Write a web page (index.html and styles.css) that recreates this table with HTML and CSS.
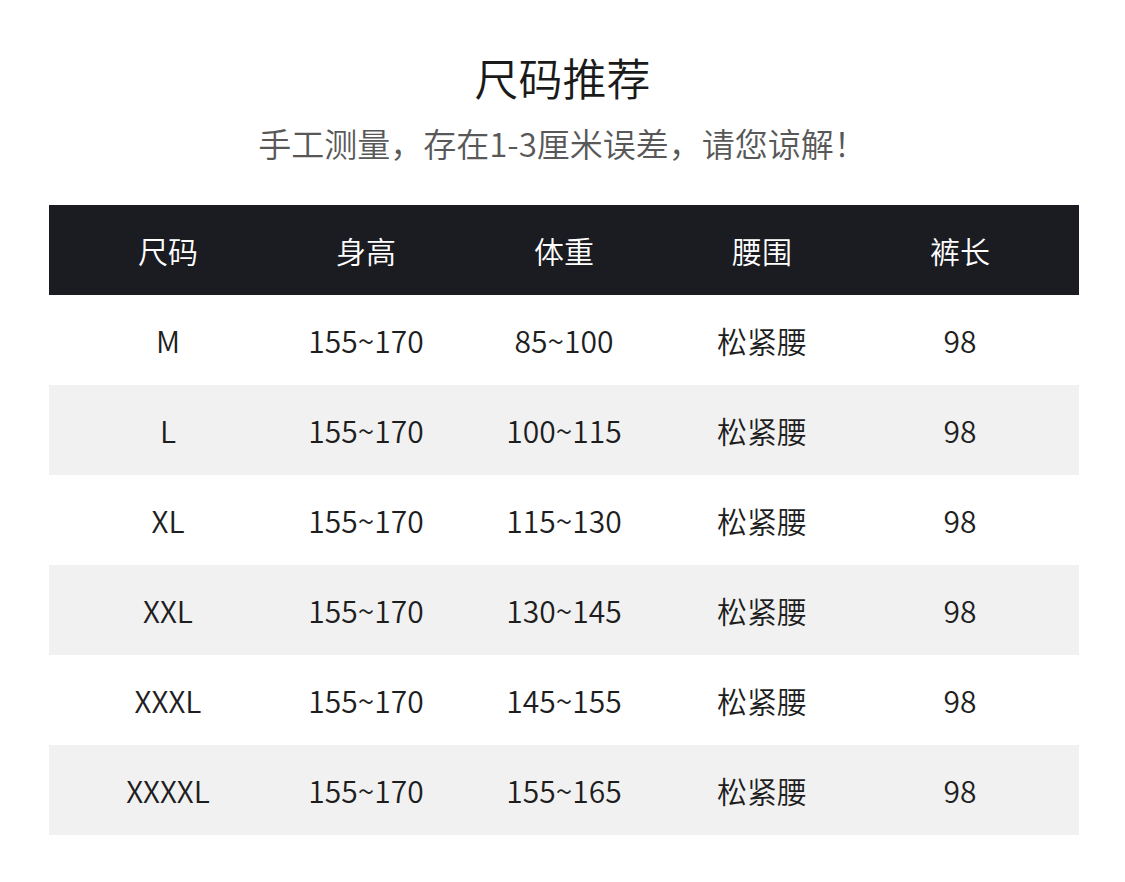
FILE: index.html
```html
<!DOCTYPE html>
<html lang="zh">
<head>
<meta charset="utf-8">
<link rel="stylesheet" href="styles.css">
</head>
<body>
<div class="page">
  <h1 class="title">尺码推荐</h1>
  <p class="subtitle">手工测量，存在1-3厘米误差，请您谅解！</p>
  <div class="table">
    <div class="row head"><span>尺码</span><span>身高</span><span>体重</span><span>腰围</span><span>裤长</span></div>
    <div class="row"><span>M</span><span>155~170</span><span>85~100</span><span>松紧腰</span><span>98</span></div>
    <div class="row alt"><span>L</span><span>155~170</span><span>100~115</span><span>松紧腰</span><span>98</span></div>
    <div class="row"><span>XL</span><span>155~170</span><span>115~130</span><span>松紧腰</span><span>98</span></div>
    <div class="row alt"><span>XXL</span><span>155~170</span><span>130~145</span><span>松紧腰</span><span>98</span></div>
    <div class="row"><span>XXXL</span><span>155~170</span><span>145~155</span><span>松紧腰</span><span>98</span></div>
    <div class="row alt"><span>XXXXL</span><span>155~170</span><span>155~165</span><span>松紧腰</span><span>98</span></div>
  </div>
</div>
</body>
</html>
```

FILE: styles.css
```css
html, body {
  margin: 0;
  padding: 0;
  background: #ffffff;
}
body {
  font-family: "Noto Sans CJK SC", "Noto Sans", sans-serif;
  font-weight: 350;
  color: #1e1e1e;
}
.page {
  width: 1125px;
  padding-top: 47px;
}
.title {
  margin: 0;
  font-size: 44px;
  font-weight: 350;
  line-height: 60px;
  text-align: center;
  color: #1a1a1a;
}
.subtitle {
  margin: 16px 0 0;
  font-size: 33px;
  font-weight: 350;
  line-height: 40px;
  text-align: center;
  color: #585858;
}
.table {
  margin: 42px 0 0 49px;
  width: 1030px;
}
.row {
  display: grid;
  grid-template-columns: repeat(5, 1fr);
  align-items: center;
  height: 90px;
  padding: 0 20px;
  font-size: 30px;
  font-weight: 350;
  color: #1e1e1e;
}
.row span {
  text-align: center;
}
.row.head {
  background: #1b1b22;
  color: #ffffff;
}
.row.alt {
  background: #f1f1f1;
}
```
